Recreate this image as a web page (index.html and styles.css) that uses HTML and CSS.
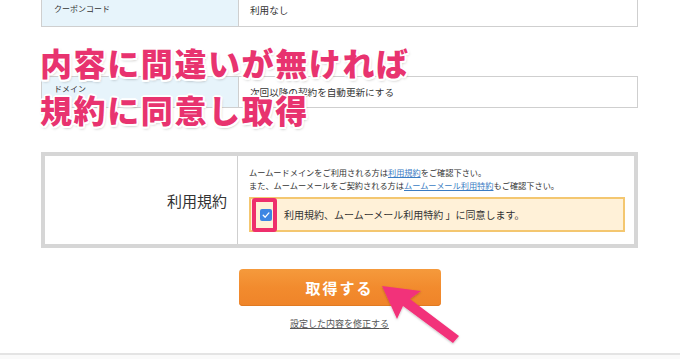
FILE: index.html
```html
<!DOCTYPE html>
<html lang="ja">
<head>
<meta charset="utf-8">
<link rel="stylesheet" href="styles.css">
</head>
<body>
<div class="page">
  <div class="tbl tbl-first">
    <div class="lab">クーポンコード</div>
    <div class="val">利用なし</div>
  </div>
  <div class="tbl tbl-domain">
    <div class="lab">ドメイン</div>
    <div class="val">次回以降の契約を自動更新にする</div>
  </div>
  <div class="terms">
    <div class="terms-lab">利用規約</div>
    <div class="terms-body">
      <p class="note">ムームードメインをご利用される方は<a href="#">利用規約</a>をご確認下さい。</p>
      <p class="note">また、ムームーメールをご契約される方は<a href="#">ムームーメール利用特約</a>もご確認下さい。</p>
      <div class="agree">
        <span class="cbwrap">
          <span class="cb"><svg viewBox="0 0 12 12" width="12" height="12"><path d="M3.2 6.2 L5.2 8.2 L8.9 3.9" fill="none" stroke="#fff" stroke-width="1.3" stroke-linecap="round" stroke-linejoin="round"/></svg></span>
          <span class="hl"></span>
        </span>
        <span class="agree-text">利用規約、ムームーメール利用特約 」に同意します。</span>
      </div>
    </div>
  </div>
  <div class="actions">
    <button class="btn">取得する</button>
    <a class="fix" href="#">設定した内容を修正する</a>
  </div>
  <div class="footer"></div>
</div>
<div class="caption">内容に間違いが無ければ<br>規約に同意し取得</div>
<svg class="arrow" width="680" height="359" viewBox="0 0 680 359">
  <defs>
    <filter id="sh" x="-20%" y="-20%" width="140%" height="140%">
      <feDropShadow dx="0" dy="1" stdDeviation="1" flood-color="#000" flood-opacity="0.25"/>
    </filter>
  </defs>
  <polygon points="382,286 421,291 410,299 459,336 453,343 403,306 397,319" fill="#f2337a" filter="url(#sh)"/>
</svg>
</body>
</html>
```

FILE: styles.css
```css
html, body {
  margin: 0;
  padding: 0;
}
body {
  width: 680px;
  height: 359px;
  overflow: hidden;
  position: relative;
  background: #fff;
  font-family: "Noto Sans CJK JP", "Noto Sans", sans-serif;
  color: #333;
}
.page {
  padding-left: 41px;
  width: 597px;
}
.tbl {
  display: grid;
  grid-template-columns: 197px 1fr;
  border: 1px solid #cfcfcf;
}
.tbl-first {
  border-top: none;
  height: 26px;
}
.tbl-domain {
  margin-top: 49px;
  height: 30px;
}
.lab {
  background: #e7f4fb;
  font-size: 8px;
  padding-left: 12px;
  display: flex;
  align-items: center;
  border-right: 1px solid #cfcfcf;
}
.val {
  font-size: 9.6px;
  padding-left: 11px;
  display: flex;
  align-items: center;
}
.tbl-first .lab, .tbl-first .val {
  align-items: flex-start;
  padding-top: 3px;
}
.tbl-domain .lab {
  align-items: flex-start;
  padding-top: 6px;
}
.tbl-domain .val {
  align-items: flex-start;
  padding-top: 8px;
}
.terms {
  margin-top: 44px;
  border: 4px solid #d6d6d6;
  display: grid;
  grid-template-columns: 193px 1fr;
  height: 88px;
}
.terms-lab {
  font-size: 15px;
  color: #333;
  display: flex;
  align-items: center;
  justify-content: flex-end;
  padding-right: 10px;
  border-right: 1px solid #cfcfcf;
}
.terms-body {
  padding: 10px 9px 0 11px;
}
.note {
  margin: 0;
  font-size: 8.2px;
  line-height: 13px;
  white-space: nowrap;
}
.note a {
  color: #3a7cc3;
}
.agree {
  margin-top: 5px;
  height: 31px;
  border: 2px solid #f4c770;
  background: #fff1d8;
  display: flex;
  align-items: center;
  padding-left: 9px;
}
.cbwrap {
  position: relative;
  width: 12px;
  height: 12px;
  flex: none;
}
.cb {
  display: block;
  width: 12px;
  height: 12px;
  border-radius: 2px;
  background: #3d86e3;
}
.cb svg {
  display: block;
}
.hl {
  position: absolute;
  left: -8px;
  top: -11px;
  width: 17px;
  height: 26px;
  border: 4px solid #ee2f6c;
  border-radius: 3px;
}
.agree-text {
  margin-left: 12px;
  font-size: 10px;
  color: #333;
}
.actions {
  display: flex;
  flex-direction: column;
  align-items: center;
  padding-top: 21px;
}
.btn {
  width: 202px;
  height: 37px;
  border: none;
  border-radius: 4px;
  background: linear-gradient(#f59a3c, #f28b2e 50%, #ef8429);
  box-shadow: inset 0 -1px 0 #e07a22;
  color: #fff;
  font-family: "Noto Sans CJK JP", sans-serif;
  font-weight: bold;
  font-size: 15px;
  letter-spacing: 2px;
  padding: 0;
}
.fix {
  margin-top: 12px;
  font-size: 9px;
  line-height: 12px;
  color: #555;
}
.footer {
  margin-top: 23px;
  margin-left: -41px;
  width: 680px;
  height: 10px;
  border-top: 2px solid #e4e4e4;
  background: #fafafa;
}
.caption {
  position: absolute;
  left: 40px;
  top: 39px;
  font-family: "Noto Sans CJK JP", sans-serif;
  font-weight: 900;
  font-size: 32px;
  letter-spacing: 1.6px;
  line-height: 47px;
  color: #e8336f;
  white-space: nowrap;
  text-shadow:
    2px 0 0 #fff, -2px 0 0 #fff, 0 2px 0 #fff, 0 -2px 0 #fff,
    1.5px 1.5px 0 #fff, -1.5px 1.5px 0 #fff, 1.5px -1.5px 0 #fff, -1.5px -1.5px 0 #fff,
    1px 2px 3px rgba(0,0,0,0.35);
}
.arrow {
  position: absolute;
  left: 0;
  top: 0;
}
```
